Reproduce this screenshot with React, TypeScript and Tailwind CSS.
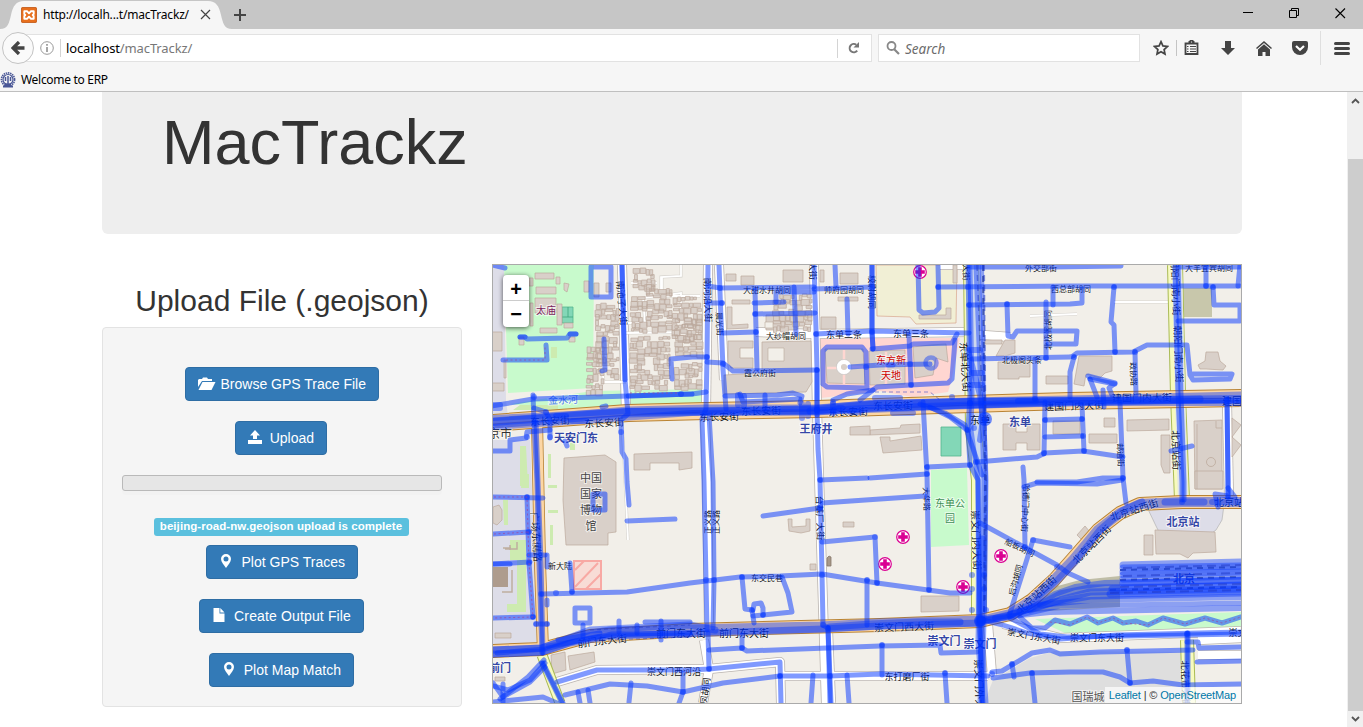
import type { ReactNode } from "react";

type Pt = [number, number];

const poly = (s: string) => "M" + s.split(" ").join("L");

/* GPS traces, drawn half transparent so that overlaps darken */
const traces: string[] = [
  "622,265 625,380 628,414 621,420 622,452 626,459 627,482 629,505",
  "622,265 624,340 625,380",
  "708,265 707,357 706,409 702,419 704,482 706,580 707,630",
  "709,415 713,482 714,580 713,628",
  "719,265 721,319 723,369 726,409",
  "814,265 816,329 817,370 817,409 818,449 820,480 822,573 823,625 828,628 831,703",
  "817,370 817,415",
  "828,628 830,703",
  "872,265 872,332 873,349",
  "872,265 872,332 873,349",
  "968,265 970,395 968,429 970,465 978,480 980,620 982,703",
  "1175,265 1178,395 1182,482 1182,500",
  "1178,265 1181,395 1184,482 1184,500",
  "1227,399 1228,482 1228,497",
  "1227,399 1228,482 1228,497",
  "534,422 537,482 539,563 542,653",
  "536,422 538,482 541,563 543,653",
  "923,402 927,475 929,590",
  "591,267 611,267 611,297 591,297 591,267",
  "520,337 525,337 527,339 567,338 570,334 576,334",
  "503,360 547,360 546,345",
  "604,339 605,370 602,371",
  "672,379 671,359 692,357 707,357",
  "492,406 533,399 628,396 692,394 706,392",
  "628,396 692,394",
  "533,395 534,422",
  "534,408 546,412 550,420 550,438",
  "492,451 510,451 510,440 526,438 527,432 550,430",
  "565,441 567,446",
  "602,407 606,406",
  "492,265 505,268",
  "708,286 720,288 814,287",
  "814,289 873,287",
  "708,303 722,303",
  "755,290 757,369",
  "754,303 784,302",
  "776,302 776,292 814,292",
  "755,314 815,313",
  "794,287 796,334",
  "723,333 756,332",
  "816,334 871,331 969,333",
  "707,362 723,363 733,371 817,370",
  "835,265 836,287",
  "847,299 848,334",
  "823,384 823,351 827,347 862,347 866,352 867,388 827,387 823,384",
  "850,367 880,365 930,364",
  "725,396 777,395 793,393 802,396 800,403",
  "765,395 765,409",
  "740,394 743,402 800,399",
  "833,400 847,394 873,390",
  "938,287 1070,286 1240,286",
  "918,265 919,310 923,313 935,312 939,308 938,265",
  "970,267 1050,267 1121,266",
  "969,305 1070,304 1082,303 1082,289",
  "1007,304 1008,336 1013,337 1017,331 1077,331 1076,344 1048,344",
  "1046,302 1046,358",
  "1053,287 1053,305",
  "972,359 1070,357 1073,356 1077,353 1133,352 1147,345 1187,345 1190,375 1193,380 1230,379 1232,374 1193,374",
  "1035,359 1035,399",
  "872,349 910,346 913,344 952,343 957,334",
  "955,340 952,379 948,383 910,385 877,387 860,400",
  "909,335 911,385",
  "1045,402 1044,454",
  "977,462 1037,457 1045,453 1083,451 1123,457",
  "1045,420 1082,419",
  "1045,437 1082,436",
  "1082,405 1084,451",
  "927,467 970,465",
  "870,478 927,474",
  "920,404 945,413 965,425 970,440 982,475",
  "930,407 950,417 967,430",
  "1023,467 1024,480 1025,547",
  "1024,487 1037,483 1097,484 1122,480",
  "1037,482 1077,482 1103,478 1123,478",
  "1114,287 1111,322 1114,325 1115,352",
  "1074,357 1070,372 1070,397",
  "1135,352 1136,395",
  "1180,267 1240,267",
  "1206,265 1206,286",
  "1213,287 1214,305 1240,305 1240,321 1178,321",
  "1240,265 1238,286",
  "1088,376 1115,383 1109,388 1112,395",
  "1090,379 1115,384",
  "1090,379 1097,397",
  "1103,390 1104,407",
  "1120,402 1122,452 1123,478 1126,503",
  "1171,451 1192,446",
  "627,521 675,519",
  "542,594 627,592 690,583 740,577 780,576 822,574 877,583 950,593 970,593",
  "570,563 572,592",
  "575,608 590,608 590,623 575,623 575,608",
  "583,625 583,637",
  "593,494 605,494 605,510 593,510 593,494",
  "527,497 529,563 533,617",
  "493,497 543,498",
  "493,534 529,532",
  "493,564 530,562",
  "493,564 510,564",
  "493,618 533,617",
  "536,624 547,624",
  "547,555 547,567",
  "547,600 547,605",
  "529,555 545,555",
  "557,682 597,670 690,670 709,669 780,662 781,703",
  "565,695 610,684 647,686 683,692 723,683 780,676",
  "542,663 562,703",
  "543,663 563,703",
  "545,667 530,682 503,697 493,683",
  "545,663 530,680 508,690 493,686",
  "544,660 528,677 500,699",
  "493,702 523,699 543,697 557,703",
  "503,684 503,702",
  "631,683 629,702",
  "683,673 683,692 679,703",
  "578,692 580,703",
  "588,690 590,703",
  "763,516 820,508",
  "822,503 880,499 925,496",
  "822,542 875,537 877,583",
  "820,480 867,478",
  "867,580 867,625",
  "742,577 745,609 752,610 754,623",
  "753,610 754,604 761,603 763,608 763,615 753,616",
  "763,615 792,612 788,593 782,577",
  "708,633 709,669",
  "709,650 742,648 747,651 827,648 880,646 940,645 941,653 977,652",
  "742,635 742,648",
  "780,676 830,676 880,674 988,676",
  "813,675 811,703",
  "847,675 849,703",
  "882,645 882,675",
  "945,673 947,703",
  "1010,613 1033,540 1070,547",
  "980,523 1057,565 1068,573 1088,582",
  "992,672 1002,671 1032,653 1050,650 1060,654 1100,652 1193,650",
  "993,678 1030,673 1070,672 1103,672 1120,677 1130,683 1153,681 1183,685 1241,684",
  "1012,664 1014,677",
  "1032,673 1035,703",
  "1127,650 1130,683",
  "983,620 1003,625 1027,633 1060,639 1117,635 1241,632",
  "1010,618 1040,634 1067,637 1241,634",
  "1187,633 1187,703",
  "1188,633 1188,690",
  "1187,642 1198,642 1199,648 1241,647",
  "1197,662 1241,661",
  "1020,617 1032,628 1045,628 1055,620 1070,624 1087,617 1098,623 1113,618 1123,623 1136,621 1148,625 1163,618 1185,624 1205,618 1222,623 1241,617",
  "497,653 545,649 580,640 612,634 690,633",
  "558,640 600,633",
  "645,622 690,622",
  "619,621 619,632",
  "637,625 637,633",
  "661,621 661,640",
  "1228,488 1235,497 1215,494 1218,507",
];

/* boulevards carry many traces; each entry is [path, width] */
const boulevards: [string, number][] = [
  ["492,423 534,420 628,412 706,410 817,410 870,406 970,403 1070,401 1242,397", 11],
  ["492,422 534,419 628,412 706,411 817,410 870,405 970,402 1070,401 1242,399", 8],
  ["492,418 534,416 628,411 706,411 817,408 870,403 970,401 1070,400 1242,401", 6],
  ["492,427 580,421 692,413 817,412 970,406 1070,403 1242,403", 6],
  ["810,411 880,408 970,405 1050,402 1200,399", 7],
  ["493,652 542,650 580,637 610,632 690,630 820,627 880,624 980,621", 11],
  ["493,654 542,652 570,643 610,636 710,633 823,629 880,626 980,623", 7],
  ["493,650 542,648 590,630 690,625 715,630", 7],
  ["548,646 580,641 610,636 690,635", 5],
  ["830,627 870,624 918,622 960,622", 7],
  ["980,621 1010,614 1032,600 1054,580 1073,560 1098,530 1120,513 1140,504 1182,502 1242,502", 10],
  ["980,621 1008,616 1034,603 1056,582 1075,562 1100,530 1122,511 1142,502", 7],
  ["970,265 972,395 971,430 978,480 979,620 983,703", 5],
  ["977,265 982,395 985,480 983,620 981,703", 7],
  ["982,265 984,395 986,480 985,610", 4],
  ["982,540 980,640 984,703", 9],
  ["968,350 980,395 983,420 980,440", 6],
  ["1165,502 1204,502", 7],
  ["1212,502 1242,502", 6],
  ["980,621 1005,618 1020,615 1050,612 1241,608", 6],
  ["980,619 1020,615 1060,606 1241,603", 5],
  ["995,618 1030,609 1055,594 1075,587 1105,583 1241,580", 6],
  ["1020,612 1045,602 1060,594 1090,588 1241,586", 7],
  ["1010,615 1050,603 1090,596 1241,593", 7],
  ["1030,610 1060,600 1090,592 1241,589", 7],
  ["1040,605 1090,600 1241,597", 6],
  ["1123,565 1241,562", 7],
  ["1123,568 1241,566", 7],
  ["1123,572 1241,569", 7],
  ["1123,575 1241,572", 7],
  ["1123,579 1241,576", 7],
  ["1123,583 1241,580", 7],
  ["1112,589 1241,585", 7],
  ["1110,594 1241,591", 7],
];

const nodes: Pt[] = [
  [534, 397], [681, 394], [546, 412], [550, 437], [621, 432], [527, 437], [707, 357], [723, 364], [756, 332], [720, 288],
  [722, 303], [755, 314], [816, 334], [817, 370], [820, 480], [820, 508], [822, 575], [823, 625], [866, 367], [911, 385],
  [938, 287], [968, 287], [969, 305], [872, 332], [1007, 304], [1046, 358], [1035, 399], [1074, 357], [1115, 352], [1135, 352],
  [1114, 287], [1206, 286], [1213, 287], [1044, 453], [1045, 420], [1082, 419], [1083, 436], [1084, 451], [1123, 478],
  [927, 467], [927, 474], [970, 465], [976, 462], [1033, 540], [1025, 547], [877, 583], [875, 537], [867, 580], [742, 577],
  [706, 580], [714, 580], [572, 592], [556, 593], [541, 594], [533, 617], [529, 563], [529, 532], [527, 497], [752, 610],
  [763, 615], [742, 648], [709, 669], [780, 676], [683, 692], [882, 645], [945, 673], [830, 676], [1012, 664], [1032, 673],
  [1127, 650], [1130, 683], [1187, 634], [1182, 502], [980, 620], [980, 620], [992, 674], [1057, 567], [536, 624], [547, 624],
  [817, 410], [817, 410], [833, 402], [833, 410], [970, 403], [970, 403], [968, 430], [974, 428], [985, 420], [985, 420],
  [972, 575], [984, 575], [972, 589], [984, 589], [972, 610], [986, 610], [929, 590], [828, 628], [952, 397], [910, 364],
];

const landBuildings: string[] = [
  "535,273 554,273 554,279 535,279", "536,287 556,287 556,294 536,294", "535,298 556,298 556,313 535,313", "557,304 562,304 562,325 557,325",
  "540,328 557,328 557,333 540,333", "529,278 533,278 533,286 529,286", "530,303 533,303 533,326 530,326", "564,283 569,284 567,292 564,290",
  "556,277 560,277 560,284 556,284", "564,323 573,323 573,328 564,328", "519,337 524,337 524,345 519,345", "569,337 575,337 575,342 569,342",
  "584,281 589,281 589,292 584,292", "594,283 599,283 599,297 594,297", "606,283 611,283 611,292 606,292",
  "492,332 502,332 502,351 492,351", "492,383 504,383 504,391 492,391", "504,360 506,360 506,378 504,378",
  "564,458 605,455 616,462 616,532 608,533 608,545 566,545 563,500", "634,454 692,452 692,468 679,470 679,463 650,463 650,470 634,470",
  "727,307 732,307 732,325 748,324 748,328 727,329", "732,300 750,300 750,304 732,304", "728,341 753,341 753,348 740,348 740,358 753,358 753,368 731,368 728,362",
  "762,342 811,341 812,382 806,392 724,394 724,375 762,373", "783,270 803,270 803,282 783,282", "840,273 858,273 858,284 840,284",
  "821,317 836,317 836,329 821,329", "838,297 858,297 858,301 838,301", "820,270 824,270 824,282 820,282", "766,315 797,315 797,330 766,330",
  "726,274 736,274 736,281 726,281", "741,276 754,276 754,285 741,285", "825,349 863,349 865,384 827,383", "869,351 905,350 905,384 870,385",
  "913,347 930,345 946,344 948,362 936,358 933,375 915,378", "919,315 946,315 946,308 951,308 951,319 919,319", "953,265 957,265 957,283 953,283",
  "870,430 900,428 901,425 920,424 920,433 870,435", "850,427 870,426 870,435 850,435", "880,437 890,437 890,441 921,436 922,450 883,453", "1003,424 1016,424 1016,432 1027,432 1027,424 1040,424 1040,450 1027,450 1027,443 1016,443 1016,450 1003,450",
  "985,340 1002,340 1002,344 985,344", "1005,340 1015,340 1015,353 1005,356 996,356", "998,362 1030,362 1030,377 1019,377 1019,379 998,379", "1046,376 1068,376 1068,384 1046,384",
  "1079,356 1112,356 1112,371 1105,373 1100,378 1086,374 1084,386 1074,384", "1104,418 1115,418 1115,427 1104,427", "1089,434 1117,434 1117,443 1089,443",
  "1053,421 1080,421 1080,434 1053,434", "1127,420 1169,419 1169,430 1127,431", "1161,435 1170,435 1170,473 1164,473 1161,465",
  "1194,421 1222,420 1222,489 1195,489", "1206,352 1218,352 1220,361 1226,366 1223,370 1206,369 1200,369 1198,365 1205,361", "1232,418 1241,425 1232,437 1241,445 1232,457",
  "921,596 959,596 959,611 921,612", "551,655 565,652 566,670 552,674", "568,656 594,652 595,662 570,670", "495,633 511,633 511,638 495,638", "495,677 505,677 505,681 495,681",
  "788,519 792,519 792,527 806,526 806,519 810,519 810,531 801,533 789,531", "843,522 854,522 854,527 843,527", "810,564 816,564 816,570 810,570",
  "1144,535 1153,535 1153,555 1144,555", "1155,530 1215,532 1216,552 1193,553 1188,558 1180,554 1156,554", "1195,471 1223,471 1223,489 1195,489", "1077,535 1085,526 1090,532 1082,540",
  "493,507 499,505 502,510 502,520 497,525 493,523",
];

/* hutong blocks: rows of small courtyard houses */
const hutong = (x0: number, y0: number, x1: number, y1: number, seed: number) => {
  const out: string[] = [];
  let s = seed;
  const rnd = () => ((s = (s * 1103515245 + 12345) % 2147483648) / 2147483648);
  for (let y = y0; y < y1; y += 5.4) {
    let x = x0 + rnd() * 2;
    while (x < x1 - 2) {
      const w = Math.min(2.5 + rnd() * 5.5, x1 - x);
      const h = 2.5 + rnd() * 4.5;
      if (rnd() > 0.15) out.push(`M${x.toFixed(1)},${(y + rnd() * 2.4).toFixed(1)}h${w.toFixed(1)}v${h.toFixed(1)}h-${w.toFixed(1)}z`);
      x += w + 0.5;
    }
  }
  return out.join("");
};
const houses =
  hutong(595, 303, 619, 376, 7) + hutong(586, 346, 604, 390, 3) + hutong(630, 295, 647, 330, 21) + hutong(646, 282, 672, 328, 12) +
  hutong(672, 296, 702, 338, 5) + hutong(629, 336, 670, 386, 31) + hutong(674, 318, 703, 352, 9) + hutong(674, 362, 702, 388, 17) +
  hutong(633, 268, 655, 287, 4) + hutong(772, 293, 812, 330, 8);

/* [text, centre x, centre y, rotation, size, colour] */
const labels: [string, number, number, number, number, string][] = [
  ["南池子大街", 622, 303, 85, 9, "#111"], ["太庙", 546, 309, 0, 10, "#7a1f5c"], ["金水河", 563, 399, -2, 10, "#4d80e8"],
  ["东长安街", 550, 420, -3, 10, "#111"], ["东长安街", 604, 422, -3, 10, "#111"], ["南河沿大街", 708, 300, 88, 9, "#111"], ["晨光街", 720, 324, 88, 8, "#111"],
  ["大甜水井胡同", 767, 289, 0, 8, "#111"], ["帅府园胡同", 844, 289, 0, 8, "#111"], ["大纱帽胡同", 786, 335, 0, 8, "#111"], ["霞公府街", 760, 372, 0, 8, "#111"],
  ["东单三条", 844, 334, 0, 9, "#111"], ["东单三条", 911, 333, 0, 9, "#111"], ["东长安街", 719, 416, -2, 10, "#111"], ["东长安街", 761, 410, -2, 10, "#111"], ["东长安街", 848, 411, -2, 10, "#111"], ["东长安街", 893, 405, -1, 10, "#111"],
  ["大街", 813, 271, 88, 9, "#111"], ["校尉胡同", 873, 292, 90, 8.5, "#111"], ["大街", 967, 272, 88, 8.5, "#111"], ["外交部街", 1041, 267, 0, 8, "#111"], ["西总部胡同", 1071, 288, 0, 8, "#111"],
  ["北极阁胡同", 1047, 330, 270, 8, "#111"], ["北极阁头条", 1022, 359, 0, 8, "#111"], ["东单北大街", 966, 367, 86, 10, "#111"], ["大羊宜宾胡同", 1209, 267, 0, 8, "#111"],
  ["朝阳门南小街", 1176, 287, 88, 9.5, "#111"], ["朝阳门南小街", 1179, 354, 88, 9.5, "#111"], ["政协路", 1134, 374, 88, 8, "#111"], ["建国门内大街", 1074, 405, -2, 10, "#111"], ["建国门内大街", 1142, 397, -1, 10, "#111"], ["建国门内大街", 1252, 400, 0, 10, "#111"],
  ["邮通街", 1121, 455, 88, 8, "#111"], ["北京站街", 1177, 450, 88, 10, "#111"], ["东单", 980, 419, 0, 10.5, "#111"],
  ["东方新", 891, 359, 0, 10, "#c00"], ["天地", 891, 374, 0, 10, "#c00"],
  ["广场东侧路", 537, 537, 86, 10, "#111"], ["新大陆", 560, 565, 0, 8, "#111"], ["正义路", 707, 522, 270, 8, "#111"], ["正义路", 715, 522, 270, 8, "#111"],
  ["台基厂大街", 820, 518, 88, 9, "#111"], ["东交民巷", 767, 577, 0, 8, "#111"], ["前门东大街", 602, 640, -7, 10, "#111"], ["前门东大街", 681, 632, 0, 10, "#111"], ["前门东大街", 744, 632, 0, 10, "#111"],
  ["崇文门西河沿", 674, 671, 0, 9, "#111"], ["凤胡同", 705, 691, 277, 9, "#111"], ["崇文门西大街", 904, 626, -2, 10, "#111"], ["东打磨厂街", 907, 676, 0, 9, "#111"],
  ["大华路", 927, 499, 88, 8, "#111"], ["崇文门内大街", 977, 540, 88, 10, "#111"], ["崇文门外大街", 980, 689, 88, 10, "#111"], ["哈德门中心街", 1026, 508, 93, 8, "#111"],
  ["船板胡同", 1020, 547, 25, 8, "#111"], ["后沟胡同", 1015, 580, 285, 8, "#111"], ["北京站西街", 1036, 594, -43, 10, "#111"], ["北京站西街", 1091, 544, -45, 10, "#111"], ["北京站西街", 1134, 509, -18, 10, "#111"], ["北京站东街", 1239, 501, 0, 10, "#111"],
  ["崇文门东大街", 1034, 636, 10, 9, "#111"], ["崇文门东大街", 1097, 637, 0, 9, "#111"], ["崇文门", 1242, 632, 0, 9, "#111"], ["北花市大街", 1186, 684, 88, 9.5, "#111"],
  ["中国", 591, 477, 0, 11, "#444"], ["国家", 591, 493, 0, 11, "#444"], ["博物", 591, 509, 0, 11, "#444"], ["馆", 591, 525, 0, 11, "#444"],
  ["东单公", 950, 502, 0, 10, "#3f8f55"], ["园", 950, 517, 0, 10, "#3f8f55"], ["北京市", 494, 432, 0, 12, "#333"], ["国瑞城", 1088, 696, 0, 11, "#555"],
  ["天安门东", 576, 437, 0, 11, "#3446a6"], ["王府井", 816, 428, 0, 11, "#3446a6"], ["东单", 1020, 421, 0, 11, "#3446a6"], ["崇文门", 944, 640, 0, 11, "#3446a6"], ["崇文门", 980, 643, 0, 11, "#3446a6"],
  ["北京站", 1183, 521, 0, 11, "#3446a6"], ["北京", 1184, 578, 0, 11, "#3446a6"], ["前门", 500, 667, 0, 11, "#3446a6"],
];

const hospitals: Pt[] = [[920, 272], [903, 537], [885, 564], [963, 587], [1001, 556]];

const streets = [
  "622,265 626,410", "708,265 706,409", "705,418 707,480 709,630", "719,265 724,380", "814,265 817,409 822,573 826,703", "969,265 971,395",
  "756,332 816,334 969,332", "828,630 831,703", "709,669 780,662 781,703", "557,682 597,670 709,669", "780,676 988,676", "1003,624 1060,638 1241,631", "1227,403 1229,497",
  "704,640 709,669 703,703", "940,265 968,265", "969,334 1010,337", "1198,640 1241,638", "1198,655 1241,655", "988,625 992,675",
];
const alleys = ["622,418 628,540", "602,370 604,382 626,382", "626,323 645,323 643,298 681,293 681,318", "626,333 692,332", "662,277 662,296 700,296", "631,283 657,283", "1114,302 1172,302", "1030,316 1077,314", "681,265 681,276 661,277 661,297"];

function CityMap() {
  return (
    <svg className="block h-full w-full" viewBox="493 265 748 438" fill="none">
      <rect x="492" y="264" width="750" height="440" fill="#f2efe9" />
      <path d="M492,265H504L506,400 508,417 492,419z M492,440H530L538,642 492,646z" fill="#dddde8" />
      <path d="M504,265H594L593,388 508,393z M592,391L703,389V403L560,410 510,404z" fill="#c8facc" />
      <path d="M931,470L967,468 969,545 931,547z M1035,619L1241,612V630L1067,634z" fill="#c8facc" />
      <path d="M520,446h6l2,40h-8z M548,454h3v24h-3z M548,485h9v3h-9z M548,510h10v3h-10z M550,525h3v20h-3z M522,474h7v14h-8z M510,540h16v72h-19v-8h10v-44h-7z M551,347h6v11h-6z M503,500h5v25h-4z M520,405h38v5h-45z M570,441h5v9h-5z" fill="#cdebb0" />
      <path d="M876,265H957L956,323 916,324 910,317 877,316z" fill="#f1efd5" stroke="#d8a58d" strokeWidth=".7" />
      <path d="M820,338H960L951,382 948,392 912,397 880,391 821,398z" fill="#ffd6d1" />
      <path d="M941,427h20v29h-20z M562,307h11v16h-11z" fill="#83d7b7" stroke="#53b58e" strokeWidth=".8" />
      <path d="M568,307v10h-6 M568,317h5" stroke="#3da57c" strokeWidth=".8" />
      <path d="M993,680L1030,658 1055,651 1187,652V703H984z" fill="#dedede" />
      <path d="M1180,288h32v29h-32z" fill="#c8c7ab" />
      <path d="M1050,588L1080,580 1120,576V607L1030,612z" fill="#bfbda6" />
      <path d="M1146,505H1224L1222,520 1216,530 1208,536 1160,534 1156,526z" fill="#dddde8" stroke="#aaa" strokeWidth=".6" />
      <path d="M493,567h15v20h-15z" fill="#ae9c8d" />
      <path d="M503,548h8 M502,592h10v-22 M510,545v5 M505,549h12v-7" stroke="#bfae9f" strokeWidth="1.5" />

      <g stroke="#bbb5b0" strokeLinejoin="round">
        {streets.map((d) => <path key={d} d={poly(d)} strokeWidth="10" />)}
      </g>
      <g stroke="#fff" strokeLinejoin="round">
        {streets.map((d) => <path key={d} d={poly(d)} strokeWidth="8.4" />)}
      </g>
      <g stroke="#d6d3ce">{alleys.map((d) => <path key={d} d={poly(d)} strokeWidth="3" />)}</g>
      <g stroke="#fff">{alleys.map((d) => <path key={d} d={poly(d)} strokeWidth="1.8" />)}</g>

      <g fill="#d9d0c9" stroke="#bba99c" strokeWidth=".7">
        {landBuildings.map((d) => <path key={d} d={poly(d) + "z"} />)}
        <path d={houses} />
      </g>
      <path d="M768,348h16v13h-16z M765,322h8v6h-8z" fill="#f2efe9" stroke="#bba99c" strokeWidth=".6" />
      <circle cx="1211" cy="462" r="4.5" stroke="#bba99c" strokeWidth=".8" />
      <path d="M1216,421v7h6 M1197,489v-65" stroke="#bba99c" strokeWidth=".7" />
      <path d="M827,368h14 M844,350v10 M844,374v10 M850,367h15 M886,352v32" stroke="#ffd6d1" strokeWidth="2.5" />
      <circle cx="844" cy="367" r="5.3" stroke="#fff" strokeWidth="4.5" />
      <circle cx="844" cy="367" r="7.6" stroke="#bbb" strokeWidth=".5" />
      <path d="M827,566v-8l2,-2 2,1v9z" fill="#a89888" stroke="#85776a" strokeWidth=".8" />
      <g stroke="#f8a9a4">
        <path d="M574,561h27v28h-27z" fill="#f8dcd6" strokeWidth="2" />
        <path d="M575,570l9,-9 M575,587l23,-24 M586,589l15,-15" strokeWidth="2" />
      </g>

      <g strokeLinejoin="round">
        <g stroke="#aabb55">
          <path d={poly("1175,265 1178,395 1182,500")} strokeWidth="16" />
          <path d={poly("971,265 973,430 979,480 979,620")} strokeWidth="16" />
          <path d={poly("542,655 560,703")} strokeWidth="11" />
          <path d={poly("1187,640 1189,703")} strokeWidth="14" />
        </g>
        <g stroke="#f7fabf">
          <path d={poly("1175,265 1178,395 1182,500")} strokeWidth="14" />
          <path d={poly("971,265 973,430 979,480 979,620")} strokeWidth="14" />
          <path d={poly("542,655 560,703")} strokeWidth="9" />
          <path d={poly("1187,640 1189,703")} strokeWidth="12" />
        </g>
        <path d={poly("1177,265 1180,395 1183,500")} stroke="#dfe3ea" strokeWidth="10" />
        <path d={poly("973,265 975,430 981,480 981,620")} stroke="#cdd8ee" strokeWidth="11" />
        <g stroke="#b98333">
          <path d={poly("492,423 628,413 706,411 817,409 970,404 1070,401 1242,398")} strokeWidth="18" />
          <path d={poly("537,422 540,563 543,652")} strokeWidth="12" />
          <path d={poly("492,651 542,649 590,636 690,630 880,625 980,621 1010,614 1032,600 1054,580 1098,530 1120,513 1140,504 1182,502 1242,502")} strokeWidth="14" />
        </g>
        <g stroke="#fcd6a4">
          <path d={poly("492,423 628,413 706,411 817,409 970,404 1070,401 1242,398")} strokeWidth="16" />
          <path d={poly("537,422 540,563 543,652")} strokeWidth="10.4" />
          <path d={poly("492,651 542,649 590,636 690,630 880,625 980,621 1010,614 1032,600 1054,580 1098,530 1120,513 1140,504 1182,502 1242,502")} strokeWidth="12" />
        </g>
        <path d={poly("492,424 628,415 706,412 817,411 970,405 1070,401 1242,398")} stroke="#c98a4a" strokeWidth=".8" />
      </g>
      <path d={poly("983,265 985,480 984,620") + "M1120,570L1241,567M1120,580L1241,577M1110,590L1241,587"} stroke="#777" strokeWidth="2" strokeDasharray="6 5" />

      <g fontFamily='"Noto Sans CJK SC", sans-serif' textAnchor="middle" dominantBaseline="central">
        {labels.map(([t, x, y, r, size, color]) => (
          <text
            key={`${t}${x}${y}`}
            transform={`translate(${x} ${y}) rotate(${r})`}
            fontSize={size}
            fill={color}
            stroke="#fff"
            strokeOpacity=".65"
            strokeWidth={color === "#111" ? 1 : 2}
            paintOrder="stroke"
            fontWeight={color === "#3446a6" ? 700 : 400}
          >
            {t}
          </text>
        ))}
      </g>

      {hospitals.map(([x, y]) => (
        <g key={x} transform={`translate(${x} ${y})`}>
          <circle r="6.3" fill="#fff" stroke="#da0092" strokeWidth="1.2" />
          <path d="M-1.800,-4.800h3.600v3h3v3.600h-3v3h-3.600v-3h-3v-3.600h3z" fill="#da0092" />
        </g>
      ))}

      <g stroke="#0033ff" strokeOpacity=".5" strokeLinecap="round" strokeLinejoin="round">
        {traces.map((d, i) => <path key={i} d={poly(d)} strokeWidth="5" />)}
      </g>
      <g stroke="#0033ff" strokeOpacity=".42" strokeLinecap="round" strokeLinejoin="round">
        {boulevards.map(([d, w], i) => <path key={i} d={poly(d)} strokeWidth={w} />)}
        <circle cx="931" cy="363" r="5.5" strokeWidth="4.5" />
        <path d="M875,398h25 M893,413h20 M738,395v10 M744,396v10 M802,404v14 M808,404v12 M833,404v9 M838,408h4 M850,412h10 M556,416h10 M572,421h14 M970,350h10 M972,373h10 M970,385h12 M494,405h6 M494,408h6 M1018,401h18" strokeWidth="6" />
        <path d="M520,337h5 M570,334h6 M888,365h5" strokeWidth="5" />
      </g>
      <g fill="#0033ff" fillOpacity=".42">
        {nodes.map(([x, y], i) => <circle key={i} cx={x} cy={y} r="3" />)}
      </g>
      <circle cx="985" cy="419" r="7" fill="#0033ff" fillOpacity=".55" />
      <circle cx="980" cy="621" r="6" fill="#0033ff" fillOpacity=".6" />
      <g stroke="#1d35c4" strokeOpacity=".5" strokeWidth="1" strokeDasharray="4 3">
        <path d={poly("590,630 690,625")} />
        <path d={poly("580,641 690,637")} />
        <path d={poly("875,392 930,392 940,400")} />
        <path d={poly("984,265 986,480 985,600")} strokeWidth="2" strokeDasharray="6 4" />
        <path d={poly("977,265 982,395")} strokeWidth="1.5" strokeDasharray="6 4" />
        <path d={poly("1123,568 1241,565") + "M1123,576L1241,573M1120,587L1241,584M1110,593L1241,590"} strokeWidth="2" strokeDasharray="9 5" />
      </g>
      <g stroke="#a0459a" strokeOpacity=".7" strokeWidth="1" strokeDasharray="2 2.5">
        <path d={poly("506,360 545,360 545,347")} />
        <path d={poly("630,393 678,393")} />
        <path d={poly("494,497 527,497 529,563 533,617 494,618")} />
        <path d={poly("494,534 529,532")} />
        <path d={poly("1050,622 1070,625 1087,617 1098,623 1113,618 1123,623 1148,625 1163,618 1185,624 1205,618 1222,623 1241,617")} />
      </g>
    </svg>
  );
}

function Button({ icon, size, children }: { icon: ReactNode; size: string; children: ReactNode }) {
  return (
    <button className={`flex h-[34px] items-center justify-between rounded border border-[#2e6da4] bg-[#337ab7] pr-3 pl-[11px] text-sm whitespace-nowrap text-white ${size}`}>
      {icon}
      <span>{children}</span>
    </button>
  );
}

const Pin = () => (
  <svg className="mb-0.5 ml-px h-[14px] w-[14px]" viewBox="0 0 14 14">
    <path fill="#fff" fillRule="evenodd" d="M7 0a5 5 0 0 1 5 5c0 3-3 6-5 9C5 11 2 8 2 5a5 5 0 0 1 5-5zm0 2.5a2.5 2.5 0 1 0 0 5 2.5 2.5 0 0 0 0-5z" />
  </svg>
);

function BrowserChrome() {
  return (
    <header className="h-[92px] shrink-0 border-b border-[#bfbfbf] bg-[#f6f6f6] font-['Noto_Sans',sans-serif]">
      <div className="flex h-[29px] bg-[#c6c6c6]">
        <div className="relative h-[29px] w-[232px] shrink-0">
          <svg className="absolute inset-0" width="232" height="29">
            <path d="M0 29C8 29 9 23 11 15C13 6 16 1 24 1H208C216 1 219 6 221 15C223 23 224 29 232 29z" fill="#f6f6f6" />
          </svg>
          <div className="relative flex h-[29px] items-center pl-[21px]">
            <svg width="16" height="16" viewBox="0 0 16 16">
              <rect width="16" height="16" rx="2" fill="#e86f1c" />
              <rect x=".5" y=".5" width="15" height="15" rx="1.5" fill="none" stroke="#c9682a" />
              <path d="M3.300 4.200H6L8 6.300 10 4.200H12.700V7L11.700 8 12.700 9V11.800H10L8 9.700 6 11.800H3.300V9L4.300 8 3.300 7z" fill="none" stroke="#fff" strokeWidth="1.900" strokeLinejoin="round" />
            </svg>
            <span className="ml-1.5 w-[147px] text-xs tracking-[-0.18px] whitespace-nowrap text-black">http://localh...t/macTrackz/</span>
            <svg className="ml-[10px]" width="11" height="11" viewBox="0 0 11 11"><path d="M1 1l9 9M10 1l-9 9" stroke="#444" strokeWidth="1.2" /></svg>
          </div>
        </div>
        <svg className="mt-[9px] ml-0.5" width="12" height="12"><path d="M6 0v12M0 6h12" stroke="#444" strokeWidth="2" /></svg>
        <div className="ml-auto flex pt-2 pr-[17px]">
          <svg className="mr-9" width="10" height="10"><path d="M0 4.500h10" stroke="#000" /></svg>
          <svg className="mr-[35px]" width="11" height="11"><path d="M.5 2.500h7v7h-7zM2.500 2.500v-2h7v7h-2" fill="none" stroke="#000" /></svg>
          <svg width="11" height="11"><path d="M.5.5l9.500 9.500M10 .5l-9.500 9.500" stroke="#000" strokeWidth="1.100" /></svg>
        </div>
      </div>
      <div className="flex h-[38px] items-center">
        <div className="z-10 ml-0.5 flex h-8 w-8 items-center justify-center rounded-full border border-[#c4c4c4] bg-[#fafafa]">
          <svg width="14" height="14" viewBox="0 0 14 14"><path d="M8 1L2 7l6 6M2.500 7H13.500" stroke="#444" strokeWidth="3.300" fill="none" /></svg>
        </div>
        <div className="-ml-3 flex h-7 w-[850px] items-center border border-[#e2e2e2] bg-white pl-[17px]">
          <svg width="14" height="14"><circle cx="7" cy="7" r="6.300" fill="none" stroke="#999" /><path d="M7 6v5M7 3v1.800" stroke="#888" strokeWidth="1.500" /></svg>
          <i className="ml-1.5 h-[18px] w-px bg-[#d4d4d4]" />
          <p className="mt-0.5 ml-[5px] text-[13px] tracking-[-0.12px] text-[#777]"><span className="text-black">localhost</span>/macTrackz/</p>
          <i className="ml-auto h-[19px] w-px bg-[#d4d4d4]" />
          <svg className="mr-[12px] ml-[10px]" width="11" height="12"><path d="M9.200 8.700A4.200 4.200 0 1 1 8.300 2.700" fill="none" stroke="#777" strokeWidth="2" /><path d="M11 0v5.500H5.500z" fill="#777" /></svg>
        </div>
        <div className="ml-[6px] flex h-7 w-[262px] items-center border border-[#e2e2e2] bg-white pl-[7px]">
          <svg width="14" height="14"><circle cx="5.500" cy="5" r="4" fill="none" stroke="#888" strokeWidth="1.800" /><path d="M8 8l5 5" stroke="#888" strokeWidth="2.200" /></svg>
          <span className="mt-0.5 ml-[5px] text-[13.500px] text-[#6c6c6c] italic">Search</span>
        </div>
        <svg className="ml-[13px]" width="16" height="16" viewBox="0 0 16 16"><path d="M8 1.700l1.900 4.200 4.600.5-3.400 3.100.9 4.500L8 11.800 4 14l.9-4.500L1.500 6.400l4.600-.5z" fill="none" stroke="#444" strokeWidth="1.700" /></svg>
        <i className="ml-[7px] h-4 w-px bg-[#c4c4c4]" />
        <svg className="ml-[7px]" width="15" height="16" viewBox="0 0 15 16"><path d="M4.500 2h1.500a1.500 1.500 0 0 1 3 0h1.500M1.500 3.500h12v10.500h-12z" fill="none" stroke="#444" strokeWidth="1.800" /><path d="M3 6.500h1.500M6 6.500h6M3 9h1.500M6 9h6M3 11.500h1.500M6 11.500h6" fill="none" stroke="#444" /></svg>
        <svg className="ml-[22px]" width="14" height="14" viewBox="0 0 14 14"><path d="M4 0h6v7h4l-7 7-7-7h4z" fill="#444" /></svg>
        <svg className="ml-[21px]" width="16" height="15" viewBox="0 0 16 15"><path d="M8 0l8 7-1 1-7-6-7 6-1-1z M8 3.300L14 8.500V15H9.500v-4h-3v4H2V8.500z" fill="#444" /></svg>
        <svg className="ml-5" width="16" height="14" viewBox="0 0 16 14"><path d="M2 0h12a2 2 0 0 1 2 2v4a8 8 0 0 1-16 0V2a2 2 0 0 1 2-2z" fill="#444" /><path d="M4 5l4 3.800L12 5" fill="none" stroke="#fff" strokeWidth="2.200" /></svg>
        <i className="ml-3 h-[34px] w-px bg-[#dfdfdf]" />
        <div className="ml-[13px] flex flex-col gap-0.5"><i className="h-[3px] w-4 rounded bg-[#444]" /><i className="h-[3px] w-4 rounded bg-[#444]" /><i className="h-[3px] w-4 rounded bg-[#444]" /></div>
      </div>
      <div className="flex h-6 items-center pt-px">
        <svg width="16" height="16" viewBox="0 0 16 16" fill="none" stroke="#4a5796">
          <circle cx="8" cy="7.500" r="6.600" strokeWidth="1.600" strokeDasharray="1.500 .7" /><circle cx="8" cy="7.500" r="5" strokeWidth="1.200" />
          <path d="M8 4v8M5.500 5v4M10.500 5v4" strokeWidth="1.500" /><path d="M3 14.500h10M5 12.500h6" strokeWidth="1.800" />
        </svg>
        <span className="ml-[5px] text-xs tracking-[-0.3px] text-black">Welcome to ERP</span>
      </div>
    </header>
  );
}

export default function App() {
  return (
    <div className="flex h-[727px] w-[1363px] flex-col overflow-hidden bg-white font-['Liberation_Sans',Arial,sans-serif] text-[#333]">
      <BrowserChrome />
      <div className="flex min-h-0 flex-1">
        <main className="w-[1347px] pl-[102px]">
          <section className="h-[142px] w-[1140px] rounded-b-md bg-[#eee] pt-[15px] pl-[60px]">
            <h1 className="text-[63px] leading-[70px]">MacTrackz</h1>
          </section>
          <div className="flex gap-[30px] pt-[30px]">
            <aside className="w-[360px] pt-5">
              <h2 className="mb-[10px] text-center text-[30px] leading-[33px]">Upload File (.geojson)</h2>
              <div className="flex h-[380px] flex-col items-center rounded border border-[#e3e3e3] bg-[#f5f5f5] pt-[39px]">
                <Button size="w-[194px]" icon={<svg width="19" height="14" viewBox="0 0 19 14"><path fill="#fff" d="M1 10V3l1-1h3l1-1.500h4L11 2h4v2H5z M5.500 5H18.500l-4 8H1.500z" /></svg>}>Browse GPS Trace File</Button>
                <div className="h-5" />
                <Button size="mr-0.5 w-[92px]" icon={<svg className="mb-0.5 ml-px" width="14" height="14"><path fill="#fff" d="M7 0l5 5.500H9V9H5V5.500H2zM0 10h14v4H0z" /></svg>}>Upload</Button>
                <div className="mt-5 h-5 w-[320px] rounded bg-[#f2f2f2]">
                  <div className="h-4 rounded-[3px] border border-[#b9b9b9] bg-[#e6e6e6]" />
                </div>
                <span className="mt-[23px] mr-0.5 h-[18px] w-[255px] rounded-[3px] bg-[#5bc0de] text-center text-[11.500px] leading-[17px] font-bold tracking-[0.06px] whitespace-nowrap text-white">beijing-road-nw.geojson upload is complete</span>
                <div className="h-[9px]" />
                <Button size="w-[152px]" icon={<Pin />}>Plot GPS Traces</Button>
                <div className="h-5" />
                <Button size="mr-px w-[165px] tracking-[0.14px]" icon={<svg className="mb-0.5" width="14" height="14"><path fill="#fff" d="M2.500 0H8.500v5.500h5V14H2.500zM9.300 0L13.500 4.500H9.300z" /></svg>}>Create Output File</Button>
                <div className="h-5" />
                <Button size="mr-px w-[145px]" icon={<Pin />}>Plot Map Match</Button>
              </div>
            </aside>
            <section className="relative h-[440px] w-[750px] border border-[#aaa]">
              <CityMap />
              <div className="absolute top-[10px] left-[10px] w-[26px] overflow-hidden rounded bg-white text-center text-[20px] font-bold text-black shadow-[0_1px_5px_rgba(0,0,0,0.65)]">
                <div className="h-[26px] border-b border-[#ccc] leading-[28px]">+</div>
                <div className="h-[26px] leading-[26px]">−</div>
              </div>
              <p className="absolute right-0 bottom-0 h-4 bg-white/70 pr-[5px] pl-1 text-[11px] leading-4 tracking-[-0.14px] text-[#333]">
                <span className="text-[#0078a8]">Leaflet</span> | © <span className="text-[#0078a8]">OpenStreetMap</span>
              </p>
            </section>
          </div>
        </main>
        <div className="flex w-[16px] flex-col items-center bg-[#f0f0f0]">
          <svg className="mt-[6px]" width="9" height="6"><path d="M1 5l3.500-3.500L8 5" fill="none" stroke="#555" strokeWidth="1.800" /></svg>
          <div className="mt-[55px] h-[552px] w-[15px] bg-[#cdcdcd]" />
          <svg className="mt-[5px]" width="9" height="6"><path d="M1 1l3.500 3.500L8 1" fill="none" stroke="#555" strokeWidth="1.800" /></svg>
        </div>
      </div>
    </div>
  );
}
